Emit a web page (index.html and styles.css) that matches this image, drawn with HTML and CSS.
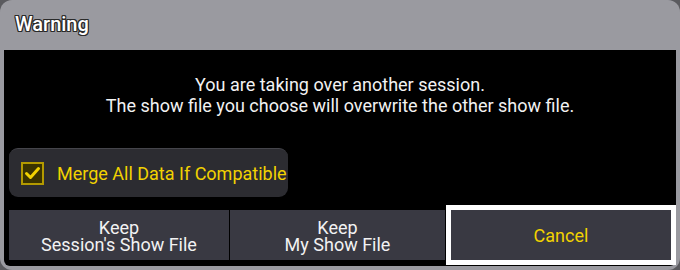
FILE: index.html
```html
<!DOCTYPE html>
<html lang="en">
<head>
    <meta charset="UTF-8">
    <title>Warning</title>
    <link rel="stylesheet" href="styles.css">
</head>
<body>
    <div class="dialog">
        <div class="title">Warning</div>
        <div class="panel">
            <p class="message">You are taking over another session.<br>The show file you choose will overwrite the other show file.</p>
            <div class="merge">
                <span class="checkbox">
                    <svg width="19" height="19" viewBox="0 0 19 19">
                        <polyline points="3.5,9.5 7.5,13.5 15.5,4.5" fill="none" stroke="#f2d200" stroke-width="3" stroke-linecap="round" stroke-linejoin="round"/>
                    </svg>
                </span>
                <span class="merge-label">Merge All Data If Compatible</span>
            </div>
            <div class="actions">
                <div class="btn btn-session">Keep<br>Session's Show File</div>
                <div class="btn btn-mine">Keep<br>My Show File</div>
                <div class="btn btn-cancel">Cancel</div>
            </div>
        </div>
    </div>
</body>
</html>
```

FILE: styles.css
```css
body {
    margin: 0;
    background-color: #5a5a5e;
    font-family: Roboto, "Liberation Sans", sans-serif;
}

.dialog {
    width: 680px;
    height: 270px;
    background-color: #9a9aa0;
    border-radius: 12px;
    display: flex;
    flex-direction: column;
    box-sizing: border-box;
}

.title {
    height: 50px;
    padding-left: 15px;
    display: flex;
    align-items: center;
    color: #fff;
    font-size: 20px;
    font-weight: 500;
    padding-bottom: 2px;
    box-sizing: border-box;
    text-shadow:
        1px 0 0 #2a2a2a, -1px 0 0 #2a2a2a, 0 1px 0 #2a2a2a, 0 -1px 0 #2a2a2a,
        1px 1px 0 #2a2a2a, -1px -1px 0 #2a2a2a, 1px -1px 0 #2a2a2a, -1px 1px 0 #2a2a2a;
}

.panel {
    flex: 1;
    margin: 0 4px 4px 4px;
    padding: 0 5px 6px 5px;
    background-color: #000;
    border-radius: 0 0 6px 6px;
    display: flex;
    flex-direction: column;
}

.message {
    margin: 24px 0 0 0;
    text-align: center;
    color: #f2f2f2;
    font-size: 18px;
    line-height: 21px;
}

.merge {
    margin-top: 32px;
    width: 279px;
    height: 49px;
    box-sizing: border-box;
    background-color: #2c2c31;
    border-top: 1px solid #45454b;
    border-radius: 9px;
    display: flex;
    align-items: center;
    padding-left: 12px;
}

.checkbox {
    width: 23px;
    height: 23px;
    box-sizing: border-box;
    border: 2px solid #b39a00;
    background-color: #3a3300;
    display: flex;
    align-items: center;
    justify-content: center;
}

.merge-label {
    margin-left: 13px;
    color: #f2d200;
    font-size: 18px;
}

.actions {
    margin-top: auto;
    display: flex;
    height: 50px;
}

.btn {
    background-color: #393942;
    color: #f2f2f2;
    font-size: 18px;
    line-height: 17px;
    text-align: center;
    display: flex;
    align-items: center;
    justify-content: center;
}

.btn-session {
    width: 220px;
    padding-top: 1px;
}

.btn-mine {
    width: 215px;
    margin-left: 1px;
    padding-top: 1px;
}

.btn-cancel {
    width: 220px;
    margin-left: 6px;
    color: #f2d200;
    outline: 5px solid #fff;
}
```
